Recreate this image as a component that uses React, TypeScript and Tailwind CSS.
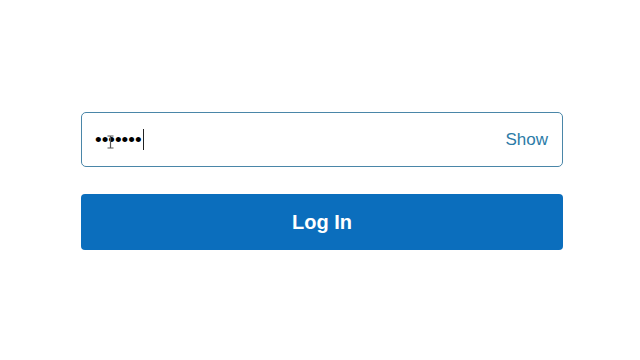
import React from 'react';

export default function App() {
  return (
    <div className="w-[640px] h-[360px] bg-white flex flex-col pt-[112px] pl-[81px] pr-[77px] gap-[27px]" style={{ fontFamily: '"Liberation Sans", Arial, sans-serif' }}>
      {/* Password field */}
      <div className="relative h-[55px] border border-[#4a86a8] rounded-[5px] flex items-center pl-[13px] pr-[14px]">
        <span className="text-[19px] leading-none text-black">•••••••</span>
        <span className="w-px h-[21px] bg-[#222] ml-px" />
        <span className="ml-auto text-[17px] text-[#2b7ba7]">Show</span>
        {/* mouse I-beam */}
        <svg className="absolute left-[24px] top-[22px]" width="9" height="14" viewBox="0 0 9 14">
          <path d="M1.5 1h6M4.5 1v12M1.5 13h6" stroke="#555" strokeWidth="1.2" fill="none" />
        </svg>
      </div>

      {/* Submit */}
      <button className="h-[56px] rounded-[4px] bg-[#0b6ebd] text-white text-[20px] font-bold">
        Log In
      </button>
    </div>
  );
}
